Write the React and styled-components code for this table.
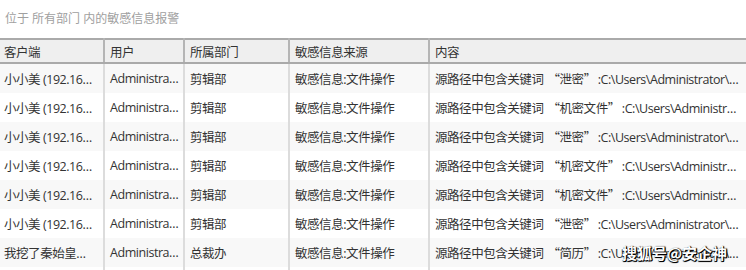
import React from 'react';
import styled, { createGlobalStyle } from 'styled-components';

const GlobalStyle = createGlobalStyle`
  body {
    margin: 0;
    background: #fff;
    font-family: "Open Sans", "Noto Sans CJK SC", sans-serif;
  }
`;

const Page = styled.div`
  position: relative;
  width: 746px;
  height: 270px;
  overflow: hidden;
  background: #fff;
`;

const Caption = styled.div`
  height: 38px;
  display: flex;
  align-items: center;
  padding: 0 0 2px 5px;
  box-sizing: border-box;
  font-size: 12px;
  color: #a0a0a0;
  white-space: pre;
`;

const Table = styled.table`
  width: 100%;
  border-collapse: collapse;
  table-layout: fixed;
  font-size: 12.5px;
  letter-spacing: -0.45px;
  color: #333;
`;

const HeadCell = styled.th`
  height: 22px;
  padding: 0 3px 0 5px;
  text-align: left;
  font-weight: normal;
  background: #efefef;
  border-top: 2px solid #aaa;
  border-bottom: 2px solid #aaa;
  border-right: 2px solid #b5b5b5;
  white-space: nowrap;
  overflow: hidden;
  &:first-child { padding-left: 4px; }
  &:last-child { border-right: none; }
`;

const Row = styled.tr`
  background: ${(p) => (p.$odd ? '#f8f8f8' : '#fff')};
`;

const Cell = styled.td`
  height: 29px;
  padding: 0 3px 0 5px;
  border-right: 2px solid #dcdcdc;
  white-space: nowrap;
  overflow: hidden;
  text-overflow: ellipsis;
  &:first-child { padding: 0 5px 0 4px; }
  &:last-child { border-right: none; padding-right: 6px; }
`;

const Quote = styled.span`
  font-family: "Noto Sans CJK SC", sans-serif;
  padding: 0 2px 0 4px;
`;

const Watermark = styled.div`
  position: absolute;
  right: 19px;
  bottom: 8px;
  font-family: "Noto Sans CJK SC", sans-serif;
  font-size: 15px;
  font-weight: bold;
  line-height: 18px;
  color: #fff;
  text-shadow: 1px 1px 0 #000, 1px 0 1px #000, 0 1px 1px #000;
`;

const columns = [
  { title: '客户端', width: 104 },
  { title: '用户', width: 80 },
  { title: '所属部门', width: 105 },
  { title: '敏感信息来源', width: 140 },
  { title: '内容' },
];

const content = (keyword, path) => (
  <>
    源路径中包含关键词<Quote>“{keyword}”</Quote>:{path}
  </>
);

const rows = [
  ['小小美 (192.168.1.22)', 'Administrator', '剪辑部', '敏感信息:文件操作', content('泄密', 'C:\\Users\\Administrator\\Desktop\\泄密.docx')],
  ['小小美 (192.168.1.22)', 'Administrator', '剪辑部', '敏感信息:文件操作', content('机密文件', 'C:\\Users\\Administrator\\Desktop')],
  ['小小美 (192.168.1.22)', 'Administrator', '剪辑部', '敏感信息:文件操作', content('泄密', 'C:\\Users\\Administrator\\Desktop\\泄密.docx')],
  ['小小美 (192.168.1.22)', 'Administrator', '剪辑部', '敏感信息:文件操作', content('机密文件', 'C:\\Users\\Administrator\\Desktop')],
  ['小小美 (192.168.1.22)', 'Administrator', '剪辑部', '敏感信息:文件操作', content('机密文件', 'C:\\Users\\Administrator\\Desktop')],
  ['小小美 (192.168.1.22)', 'Administrator', '剪辑部', '敏感信息:文件操作', content('泄密', 'C:\\Users\\Administrator\\Desktop\\泄密.docx')],
  ['我挖了秦始皇的坟 (192.168.1.8)', 'Administrator', '总裁办', '敏感信息:文件操作', content('简历', 'C:\\Users\\Administrator\\Desktop\\简历.docx')],
];

export default function App() {
  return (
    <Page>
      <GlobalStyle />
      <Caption>位于 所有部门 内的敏感信息报警</Caption>
      <Table>
        <colgroup>
          {columns.map((c) => (
            <col key={c.title} style={c.width ? { width: c.width } : undefined} />
          ))}
        </colgroup>
        <thead>
          <tr>
            {columns.map((c) => (
              <HeadCell key={c.title}>{c.title}</HeadCell>
            ))}
          </tr>
        </thead>
        <tbody>
          {rows.map((r, i) => (
            <Row key={i} $odd={i % 2 === 0}>
              {r.map((v, j) => (
                <Cell key={j}>{v}</Cell>
              ))}
            </Row>
          ))}
          <Row $odd={false}>
            {columns.map((c) => (
              <Cell key={c.title} />
            ))}
          </Row>
        </tbody>
      </Table>
      <Watermark>搜狐号@安企神</Watermark>
    </Page>
  );
}
